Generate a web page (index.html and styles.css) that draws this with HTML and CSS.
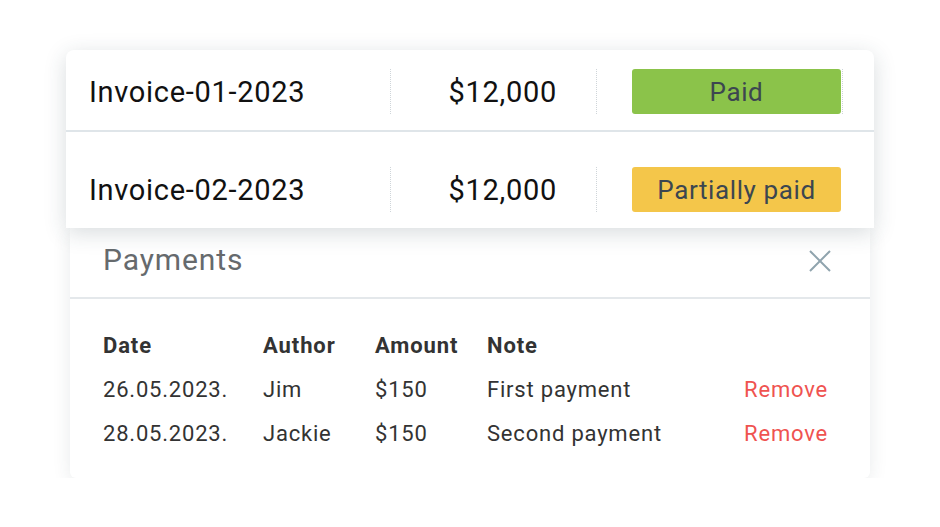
FILE: index.html
```html
<!DOCTYPE html>
<html>
<head>
    <title>Invoices</title>
    <meta charset="utf-8">
    <link rel="stylesheet" href="styles.css">
</head>
<body>
    <div class="stack">
        <div class="invoices">
            <div class="invoice_row first_row">
                <div class="cell invoice_name">Invoice-01-2023</div>
                <div class="cell invoice_amount">$12,000</div>
                <div class="cell invoice_status last_cell">
                    <span class="badge badge_paid">Paid</span>
                </div>
            </div>
            <div class="invoice_row second_row">
                <div class="cell invoice_name">Invoice-02-2023</div>
                <div class="cell invoice_amount">$12,000</div>
                <div class="cell invoice_status">
                    <span class="badge badge_partial">Partially paid</span>
                </div>
            </div>
        </div>

        <div class="payments">
            <div class="payments_header">
                <div class="payments_title">Payments</div>
                <svg class="close_icon" width="22" height="22" viewBox="0 0 22 22">
                    <path d="M1 1 L21 21 M21 1 L1 21" stroke="#90a4ae" stroke-width="2" fill="none"/>
                </svg>
            </div>
            <div class="payments_table">
                <div class="th">Date</div>
                <div class="th">Author</div>
                <div class="th">Amount</div>
                <div class="th">Note</div>
                <div class="th"></div>

                <div class="td">26.05.2023.</div>
                <div class="td">Jim</div>
                <div class="td">$150</div>
                <div class="td">First payment</div>
                <div class="td remove">Remove</div>

                <div class="td">28.05.2023.</div>
                <div class="td">Jackie</div>
                <div class="td">$150</div>
                <div class="td">Second payment</div>
                <div class="td remove">Remove</div>
            </div>
        </div>
    </div>
</body>
</html>
```

FILE: styles.css
```css
body {
    margin: 0;
    background-color: #ffffff;
    font-family: Roboto, "Liberation Sans", sans-serif;
}

.stack {
    width: 808px;
    padding: 50px 0 0 66px;
}

.invoices {
    position: relative;
    z-index: 1;
    background: #ffffff;
    border-radius: 8px 8px 0 0;
    box-shadow: 0 5px 22px rgba(40, 60, 70, 0.18);
}

.invoice_row {
    display: grid;
    grid-template-columns: 324px 206px 247px 1fr;
    align-items: center;
}

.first_row {
    padding: 19px 0 16px 0;
    border-bottom: 2px solid #dfe5e9;
}

.second_row {
    padding: 35px 0 16px 0;
}

.cell {
    height: 45px;
    display: flex;
    align-items: center;
    font-size: 29px;
    letter-spacing: 0.7px;
    color: #111111;
}

.invoice_name {
    padding-left: 23px;
}

.invoice_amount {
    justify-content: flex-end;
    padding-right: 39px;
    border-left: 1px dotted #cfd5d9;
}

.invoice_status {
    padding-left: 35px;
    border-left: 1px dotted #cfd5d9;
    letter-spacing: 0;
}

.last_cell {
    border-right: 1px dotted #cfd5d9;
}

.badge {
    width: 209px;
    height: 45px;
    border-radius: 3px;
    display: flex;
    align-items: center;
    justify-content: center;
    font-size: 26px;
    letter-spacing: 0.6px;
    color: #3c4650;
}

.badge_paid {background-color: #8bc34a;}
.badge_partial {background-color: #f4c64a;}

.payments {
    margin: 0 4px;
    background: #ffffff;
    border-radius: 0 0 6px 6px;
    box-shadow: 0 4px 18px rgba(40, 60, 70, 0.10);
}

.payments_header {
    height: 69px;
    display: flex;
    align-items: center;
    justify-content: space-between;
    padding: 0 39px 0 33px;
    border-bottom: 2px solid #e4e8eb;
}

.payments_title {
    font-size: 30px;
    letter-spacing: 0.9px;
    color: #666a6d;
    margin-bottom: 6px;
}

.close_icon {
    margin-bottom: 4px;
}

.payments_table {
    display: grid;
    grid-template-columns: 160px 112px 112px 1fr auto;
    grid-auto-rows: 44px;
    align-items: center;
    padding: 24px 42px 23px 33px;
}

.th {
    font-size: 22px;
    font-weight: bold;
    letter-spacing: 0.9px;
    color: #333333;
}

.td {
    font-size: 22px;
    letter-spacing: 0.8px;
    color: #333333;
}

.remove {color: #ef5350;}
```
